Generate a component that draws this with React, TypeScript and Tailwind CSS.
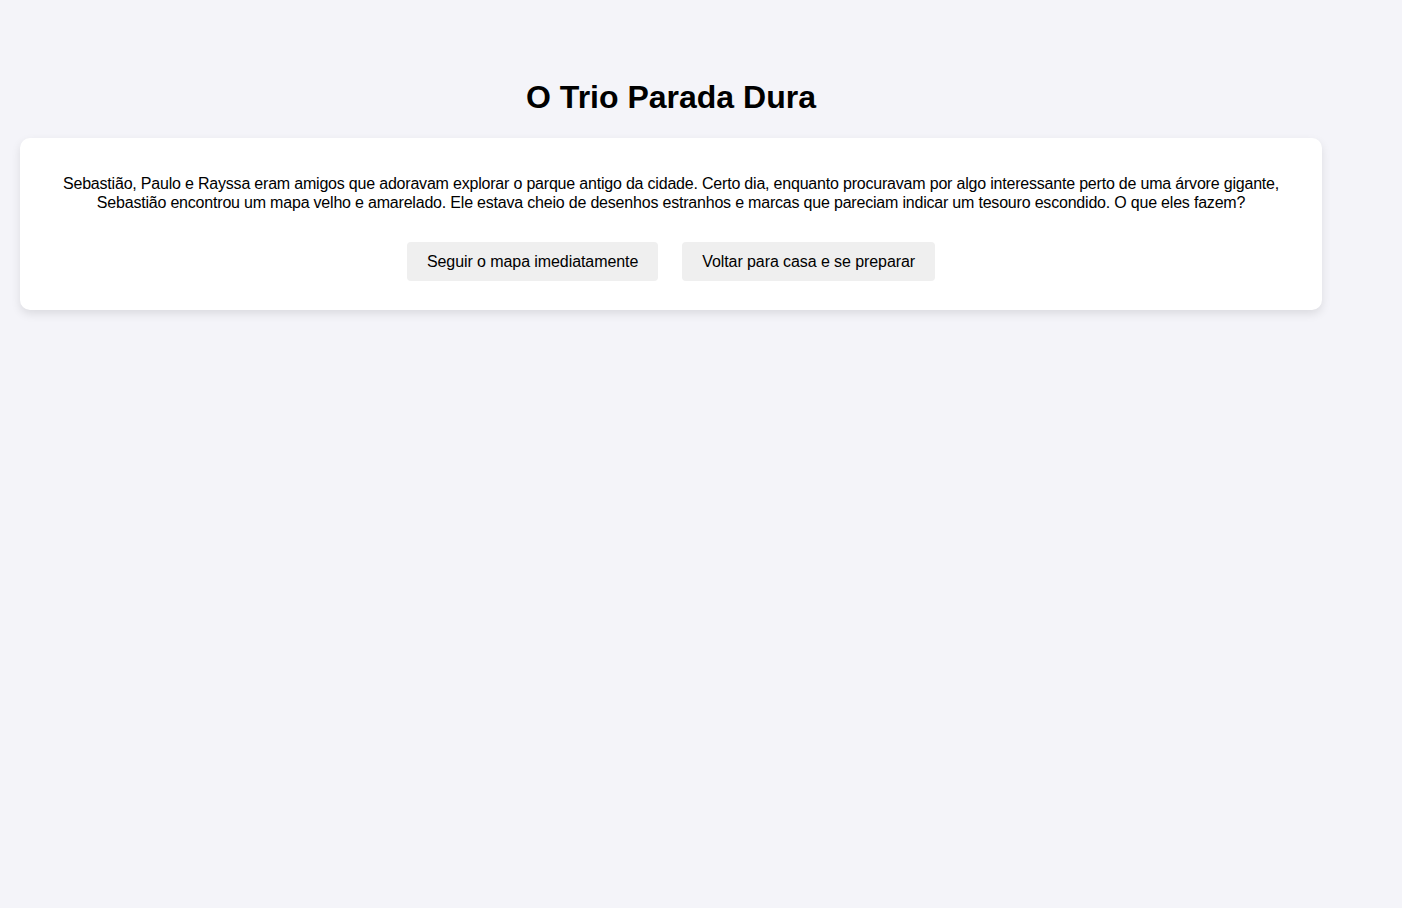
import React from 'react'

const choices = ['Seguir o mapa imediatamente', 'Voltar para casa e se preparar'];

const App: React.FC = () => {
    return (
        <div className="min-h-screen w-full bg-[#f4f4f9] px-5 pt-[77px] font-['Liberation_Sans',Arial,sans-serif] text-black">
            <div className="w-[1302px]">
                {/* Title */}
                <h1 className="text-center text-[32px] leading-[40px] font-bold mb-[21px]">O Trio Parada Dura</h1>

                {/* Story card */}
                <div className="bg-white rounded-[10px] shadow-[0_4px_10px_rgba(0,0,0,0.1)] px-10 pt-[36px] pb-[29px]">
                    <p className="text-center text-base leading-[19px] tracking-[-0.2px]">
                        Sebastião, Paulo e Rayssa eram amigos que adoravam explorar o parque antigo da cidade. Certo dia, enquanto procuravam por algo interessante perto de uma árvore gigante, Sebastião encontrou um mapa velho e amarelado. Ele estava cheio de desenhos estranhos e marcas que pareciam indicar um tesouro escondido. O que eles fazem?
                    </p>
                    <div className="flex justify-center gap-6 mt-[30px]">
                        {choices.map((c) => (
                            <button
                                key={c}
                                className="h-[39px] px-5 rounded bg-[#efefef] text-base tracking-[-0.08px] text-black"
                            >
                                {c}
                            </button>
                        ))}
                    </div>
                </div>
            </div>
        </div>
    );
};

export default App;
